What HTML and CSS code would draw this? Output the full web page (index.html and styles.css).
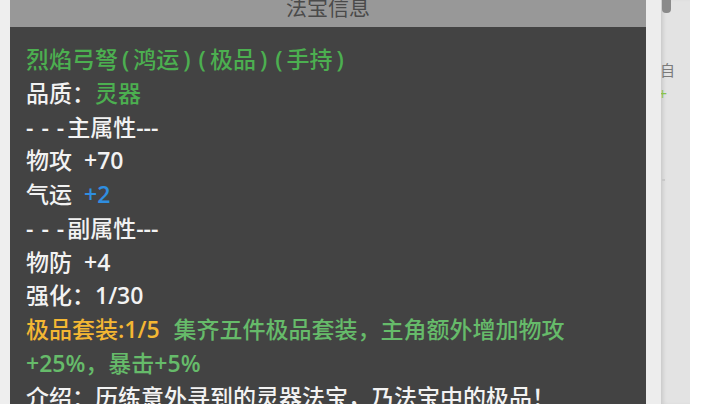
FILE: index.html
```html
<!DOCTYPE html>
<html lang="zh">
<head>
    <meta charset="UTF-8">
    <meta name="viewport" content="width=device-width, initial-scale=1.0">
    <title>法宝信息</title>
    <link rel="stylesheet" href="styles.css">
</head>
<body>
    <div class="page">
        <div class="edge"></div>

        <div class="dialog">
            <div class="dialog-title">法宝信息</div>
            <div class="dialog-body">
                <div class="line green">烈焰弓弩<span class="p">(</span>鸿运<span class="p">)</span><span class="p">(</span>极品<span class="p">)</span><span class="p">(</span>手持<span class="p">)</span></div>
                <div class="line">品质：<span class="green">灵器</span></div>
                <div class="line"><span class="dash">- - -</span>主属性<span class="num">---</span></div>
                <div class="line">物攻 <span class="val">+70</span></div>
                <div class="line">气运 <span class="val blue">+2</span></div>
                <div class="line"><span class="dash">- - -</span>副属性<span class="num">---</span></div>
                <div class="line">物防 <span class="val">+4</span></div>
                <div class="line">强化：<span class="num">1/30</span></div>
                <div class="line">
                    <span class="gold">极品套装<span class="num">:1/5</span></span><span class="set-desc">集齐五件极品套装，主角额外增加物攻<br><span class="num">+25%</span>，暴击<span class="num">+5%</span></span>
                </div>
                <div class="line">介绍：历练意外寻到的灵器法宝，乃法宝中的极品！</div>
            </div>
        </div>

        <div class="gap"></div>

        <div class="side">
            <div class="side-thumb"></div>
            <div class="side-text">自</div>
            <div class="side-plus">+</div>
            <div class="side-dot"></div>
        </div>
    </div>
</body>
</html>
```

FILE: styles.css
```css
/* 基础 */
body {
    margin: 0;
    padding: 0;
    background: #fff;
    font-family: "Open Sans", "Noto Sans CJK SC", sans-serif;
    overflow: hidden;
}

.page {
    display: flex;
    height: 404px;
    overflow: hidden;
}

.edge {
    width: 10px;
    background: #eeeeee;
    flex-shrink: 0;
}

/* 弹窗 */
.dialog {
    width: 636px;
    flex-shrink: 0;
    background: #434343;
    display: flex;
    flex-direction: column;
}

.dialog-title {
    height: 40px;
    margin-top: -13px;
    line-height: 40px;
    background: #989898;
    color: #4a4a4a;
    font-size: 21px;
    text-align: center;
    flex-shrink: 0;
}

.dialog-body {
    padding: 16px 16px 0;
    color: #f2f2f2;
    font-size: 23px;
    line-height: 33.75px;
    font-weight: 500;
}

.line {
    white-space: nowrap;
}

.p {
    margin: 0 4px;
    font-weight: 600;
}

.dash {
    letter-spacing: 1px;
    margin-right: 2px;
    font-weight: 600;
}

.num {
    font-weight: 600;
}

.val {
    margin-left: 6px;
    font-weight: 600;
}

.green {
    color: #4caf50;
}

.blue {
    color: #2f8ee0;
}

.gold {
    color: #f4b733;
}

.set-desc {
    margin-left: 14px;
    color: #66bb6a;
}

/* 右侧 */
.gap {
    width: 15px;
    background: #ededed;
    flex-shrink: 0;
}

.side {
    width: 29px;
    flex-shrink: 0;
    background: #e3e3e3;
    box-shadow: inset 4px 0 4px -2px rgba(0, 0, 0, 0.12);
    overflow: hidden;
}

.side-thumb {
    width: 9px;
    height: 13px;
    margin-left: 1px;
    background: #8a8a8a;
    border-radius: 0 0 4px 4px;
}

.side-text {
    margin: 48px 0 0 -1px;
    font-size: 15px;
    line-height: 18px;
    color: #7a7a7a;
}

.side-plus {
    margin: 6px 0 0 -3px;
    font-size: 16px;
    line-height: 18px;
    color: #8bc34a;
}

.side-dot {
    width: 3px;
    height: 2px;
    margin: 76px 0 0 1px;
    background: #c8c8c8;
}
```
